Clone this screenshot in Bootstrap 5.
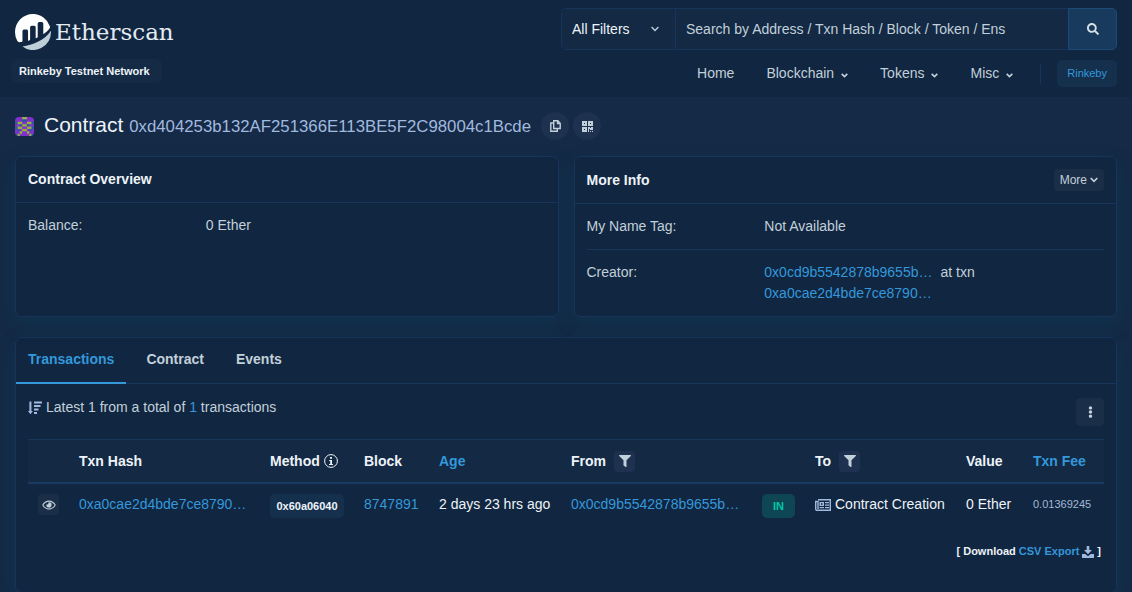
<!DOCTYPE html>
<html lang="en">
<head>
<meta charset="utf-8">
<meta name="viewport" content="width=device-width, initial-scale=1">
<title>Contract | Etherscan</title>
<link href="https://cdn.jsdelivr.net/npm/bootstrap@5.3.0/dist/css/bootstrap.min.css" rel="stylesheet">
<style>
:root{--panel:#112640;--page:#142a46;--line:#17345a;--txt:#c1d0da;--bright:#edf3f8;--accent:#3498db;--chip:#1b2e48;--teal:#14304d}
body{background:var(--page);color:var(--txt);font:14px/21px "Liberation Sans",Arial,sans-serif}
a{color:var(--accent);text-decoration:none}
svg{display:block;fill:currentColor}
svg.ln{fill:none;stroke:currentColor}
.edge{padding-left:15px;padding-right:15px}
.site-head{background:var(--panel);padding-top:8px;padding-bottom:10px}
.head-grid{display:grid;grid-template-columns:minmax(0,1fr) minmax(0,556px)}
.brand{color:#fff;gap:4px;margin-top:6px}
.brand span{font:23px/36px "DejaVu Serif",serif;color:#e4ebf2}
.net-tag{background:#152a44;border-radius:6px;color:var(--bright);font-size:11px;line-height:24px;font-weight:700;padding:0 12px 0 8px;margin:9px 0 0 -4px}
.finder{border:1px solid var(--line);border-radius:5px;background:#132944;height:42px}
.finder select{appearance:none;width:114px;border:0;border-right:1px solid var(--line);background:transparent;color:var(--bright);padding:0 10px;outline:0}
.finder select option{background:var(--panel)}
.pick{position:relative}
.pick svg{position:absolute;right:17px;top:17px;pointer-events:none}
.finder input{border:0;background:transparent;color:var(--txt);padding:0 10px;min-width:0;outline:0}
.finder input::placeholder{color:var(--txt);opacity:1}
.finder button{width:49px;margin:-1px;border:1px solid #1c4a78;background:#183a5c;color:#d5dfe8;border-radius:0 5px 5px 0}
.main-nav{margin-top:10px;gap:32px}
.main-nav a.item{color:var(--txt);gap:7px}
.main-nav .rule{width:1px;height:20px;background:var(--line);margin-left:-5px}
.main-nav .net{margin-left:-16px;background:var(--teal);border:0;border-radius:5px;color:var(--accent);font-size:11px;line-height:27px;padding:0 10px}
.title-row{padding-top:14px;padding-bottom:15px}
.title-row h1{font-size:21px;line-height:28px;color:var(--bright);font-weight:400;margin:0 10px}
.title-row h1 span{font-size:80%;color:#a2b9df}
.round-btn{width:28px;height:28px;border:0;border-radius:50%;background:#1e3250;color:var(--txt);padding:0}
.panel{background:var(--panel);border:1px solid var(--line);border-radius:7px;box-shadow:0 8px 19px rgba(4,76,104,.25)}
.duo{display:grid;grid-template-columns:1fr 1fr;gap:15px}
.panel-head{padding:12px;border-bottom:1px solid var(--line)}
.panel-head h2{font-size:14px;line-height:21px;font-weight:700;color:var(--bright);margin:0}
.panel-body{padding:12px}
.panel-body .row{--bs-gutter-x:16px}
.more-btn{border:0;border-radius:4px;background:var(--chip);color:var(--txt);font-size:12px;line-height:22px;padding:0 6px;gap:3px}
.panel-body hr{margin:12px 0;border-color:var(--line);opacity:1}
.tabs-card{margin-top:20px}
.tabs{border-bottom:1px solid var(--line);gap:8px}
.tabs a{color:var(--txt);font-weight:700;padding:11px 12px 12px;border-bottom:2px solid transparent;margin-bottom:-1px}
.tabs a.active{color:var(--accent);border-color:var(--accent)}
.kebab{width:28px;height:28px;border:0;border-radius:4px;background:var(--chip);color:var(--txt);padding:0;margin-top:2px}
.latest{line-height:23px}
.txns{width:100%;min-width:1076px;table-layout:fixed;margin-top:13px;border-collapse:separate;border-spacing:0}
.txns th{background:#132944;border-top:1px solid var(--line);border-bottom:2px solid #1a3a63;color:var(--bright);height:45px;padding:0 10px;white-space:nowrap}
.txns td{padding:10px;height:44px;white-space:nowrap;color:var(--bright)}
.mini{width:21px;height:21px;border:0;border-radius:4px;background:var(--chip);color:var(--txt);padding:0}
.mini.f{background:#1e3250}
.chip{display:block;line-height:24px;border-radius:5px;font-size:11px;font-weight:700;text-align:center}
.m-chip{background:var(--teal);color:var(--bright);width:74px}
.in-chip{background:#0f4654;color:#00c9a7;width:33px}
.txns td.fee{font-size:11px;color:#a2b9d4}
.export{font-size:11px;font-weight:700;color:var(--bright);padding:13px 3px 30px 0;gap:3px}
.soft{color:#a2b9df}
.ident{border-radius:4px}
</style>
</head>
<body>
<header class="site-head edge">
 <div class="head-grid">
  <div>
   <a href="#" class="brand d-flex align-items-center">
    <svg width="36" height="36" viewBox="0 0 293.775 293.671" aria-hidden="true"><path d="M61.055,139.379a12.405,12.405,0,0,1,12.468-12.4l20.676.068a12.415,12.415,0,0,1,12.415,12.415V217.65c2.328-.69,5.319-1.426,8.59-2.2a10.347,10.347,0,0,0,7.979-10.071V108.432A12.418,12.418,0,0,1,135.6,96.015h20.7a12.419,12.419,0,0,1,12.415,12.417v90s5.184-2.1,10.233-4.229a10.358,10.358,0,0,0,6.326-9.54V77.388A12.416,12.416,0,0,1,197.68,64.973h20.7A12.416,12.416,0,0,1,230.8,77.388v88.567c17.945-13.006,36.132-28.648,50.566-47.455a20.82,20.82,0,0,0,3.185-19.443A146.6,146.6,0,0,0,149.066,0C66.9-1.1,0,65.553,0,147.7a146.528,146.528,0,0,0,19.4,73.3,18.468,18.468,0,0,0,17.622,9.1c3.932-.346,8.828-.836,14.648-1.519a10.343,10.343,0,0,0,9.186-10.27V139.379"/><path fill="#bfcfda" d="M60.61,264.827a146.74,146.74,0,0,0,233.165-118.756c0-3.381-.157-6.724-.382-10.045C239.763,216.022,140.746,253.416,60.609,264.81"/></svg>
    <span>Etherscan</span></a>
   <div class="net-tag d-inline-block">Rinkeby Testnet Network</div>
  </div>
  <div>
   <form class="finder d-flex" onsubmit="return false">
    <div class="pick d-flex"><select aria-label="Filter"><option>All Filters</option><option>Addresses</option><option>Tokens</option></select><svg class="ln" width="8" height="6" viewBox="0 0 8 6" stroke-width="1.3"><path d="M.6 1 4 4.5 7.4 1"/></svg></div>
    <input class="flex-fill" type="text" aria-label="Search" placeholder="Search by Address / Txn Hash / Block / Token / Ens">
    <button type="submit" aria-label="Search" class="d-flex align-items-center justify-content-center"><svg width="12" height="12" viewBox="0 0 512 512"><path d="M505 442.7L405.3 343c-4.5-4.5-10.6-7-17-7H372c27.6-35.3 44-79.7 44-128C416 93.1 322.9 0 208 0S0 93.1 0 208s93.1 208 208 208c48.3 0 92.7-16.4 128-44v16.3c0 6.4 2.5 12.5 7 17l99.7 99.7c9.4 9.4 24.6 9.4 33.9 0l28.3-28.3c9.4-9.4 9.4-24.6.1-34zM208 336c-70.7 0-128-57.2-128-128 0-70.7 57.2-128 128-128 70.7 0 128 57.2 128 128 0 70.7-57.2 128-128 128z"/></svg></button>
   </form>
   <nav class="main-nav d-flex align-items-center justify-content-end">
    <a class="item" href="#">Home</a>
    <a class="item d-flex align-items-center" href="#">Blockchain <svg class="ln mt-1" width="7" height="5" viewBox="0 0 7 5" stroke-width="1.7"><path d="M.7.8 3.5 3.5 6.3.8"/></svg></a>
    <a class="item d-flex align-items-center" href="#">Tokens <svg class="ln mt-1" width="7" height="5" viewBox="0 0 7 5" stroke-width="1.7"><path d="M.7.8 3.5 3.5 6.3.8"/></svg></a>
    <a class="item d-flex align-items-center" href="#">Misc <svg class="ln mt-1" width="7" height="5" viewBox="0 0 7 5" stroke-width="1.7"><path d="M.7.8 3.5 3.5 6.3.8"/></svg></a>
    <span class="rule"></span>
    <button type="button" class="net">Rinkeby</button>
   </nav>
  </div>
 </div>
</header>
<main class="edge">
 <div class="title-row d-flex align-items-center">
  <svg class="ident" width="19" height="19" viewBox="0 0 8 8" aria-hidden="true"><path fill="#8130cc" d="M0 0h8v8H0z"/><path fill="#93b53f" d="M3 0h2v1H3zM1 2h2v1H1zM5 2h2v1H5zM3 3h2v1H3zM1 4h2v1H1zM5 4h2v1H5zM3 5h2v1H3zM2 6h1v1H2zM5 6h1v1H5zM1 7h1v1H1zM6 7h1v1H6z"/><path fill="#2b5a9c" d="M3 1h2v1H3zM0 2h1v1H0zM7 2h1v1H7zM2 3h1v1H2zM5 3h1v1H5zM0 4h1v1H0zM7 4h1v1H7zM1 5h1v1H1zM6 5h1v1H6zM0 7h1v1H0zM7 7h1v1H7z"/></svg>
  <h1>Contract <span>0xd404253b132AF251366E113BE5F2C98004c1Bcde</span></h1>
  <button type="button" class="round-btn me-1 d-flex align-items-center justify-content-center" aria-label="Copy address"><svg class="ln" width="11" height="12" viewBox="0 0 11 12" stroke-width="1.4"><path d="M3.7.8h4.1l2.4 2.4v5.3H3.7zM7.5.8v2.7h2.7M3.7 3H.8v8.2h6.5V8.5"/></svg></button>
  <button type="button" class="round-btn d-flex align-items-center justify-content-center" aria-label="QR code"><svg width="11" height="11" viewBox="0 0 11 11" fill-rule="evenodd"><path d="M0 0h5v5H0zM2 2v1h1V2zM6 0h5v5H6zM8 2v1h1V2zM0 6h5v5H0zM2 8v1h1V8zM6 6h2v1h1V6h2v3H8V8H7v3H6zM8 10h1v1H8zM10 10h1v1h-1z"/></svg></button>
 </div>
 <div class="duo">
  <section class="panel">
   <div class="panel-head"><h2>Contract Overview</h2></div>
   <div class="panel-body"><div class="row"><div class="col-4">Balance:</div><div class="col-8">0 Ether</div></div></div>
  </section>
  <section class="panel">
   <div class="panel-head d-flex align-items-center justify-content-between"><h2>More Info</h2><button type="button" class="more-btn d-flex align-items-center">More <svg class="ln" width="8" height="6" viewBox="0 0 8 6" stroke-width="1.7"><path d="M.7 1 4 4.3 7.3 1"/></svg></button></div>
   <div class="panel-body">
    <div class="row"><div class="col-4">My Name Tag:</div><div class="col-8">Not Available</div></div>
    <hr>
    <div class="row"><div class="col-4">Creator:</div><div class="col-8"><a href="#" class="me-2">0x0cd9b5542878b9655b…</a>at txn<br><a href="#">0xa0cae2d4bde7ce8790…</a></div></div>
   </div>
  </section>
 </div>
 <section class="panel tabs-card">
  <nav class="tabs d-flex"><a class="active" href="#">Transactions</a><a href="#">Contract</a><a href="#">Events</a></nav>
  <div class="panel-body pb-0">
   <div class="d-flex justify-content-between align-items-start">
    <div class="latest d-flex align-items-center gap-1"><svg class="soft" width="14" height="14" viewBox="0 0 14 14"><path d="M1.4.5h2V10h1.5l-2.5 3.2L0 10h1.4zM6 .5h8v2H6zM6 4h6.5v2H6zM6 7.5h4.5v2H6zM6 11h3v2H6z"/></svg><span>Latest 1 from a total of <a href="#">1</a> transactions</span></div>
    <button type="button" class="kebab d-flex align-items-center justify-content-center" aria-label="Options"><svg width="5" height="12" viewBox="0 0 192 512"><path d="M96 184c39.8 0 72 32.2 72 72s-32.2 72-72 72-72-32.2-72-72 32.2-72 72-72zM24 80c0 39.8 32.2 72 72 72s72-32.2 72-72S135.8 8 96 8 24 40.2 24 80zm0 352c0 39.8 32.2 72 72 72s72-32.2 72-72-32.2-72-72-72-72 32.2-72 72z"/></svg></button>
   </div>
   <div class="table-responsive">
   <table class="txns">
    <colgroup><col style="width:41px"><col style="width:191px"><col style="width:94px"><col style="width:75px"><col style="width:132px"><col style="width:191px"><col style="width:53px"><col style="width:151px"><col style="width:67px"><col style="width:81px"></colgroup>
    <thead><tr>
     <th></th><th>Txn Hash</th>
     <th><div class="d-flex align-items-center gap-1">Method <svg width="14" height="14" viewBox="0 0 14 14"><circle cx="7" cy="7" r="6.4" fill="none" stroke="currentColor"/><path d="M6 3h2v1.7H6zM5.2 6H8v4h1v1H5v-1h1.2V7h-1z"/></svg></div></th>
     <th>Block</th><th><a href="#">Age</a></th>
     <th><div class="d-flex align-items-center gap-2">From <button type="button" class="mini f d-flex align-items-center justify-content-center" aria-label="Filter by sender"><svg width="12" height="12" viewBox="0 0 512 512"><path d="M487.976 0H24.028C2.71 0-8.047 25.866 7.058 40.971L192 225.941V432c0 7.831 3.821 15.17 10.237 19.662l80 55.98C298.02 518.69 320 507.493 320 487.98V225.941l184.947-184.97C520.021 25.896 509.338 0 487.976 0z"/></svg></button></div></th>
     <th></th>
     <th><div class="d-flex align-items-center gap-2">To <button type="button" class="mini f d-flex align-items-center justify-content-center" aria-label="Filter by recipient"><svg width="12" height="12" viewBox="0 0 512 512"><path d="M487.976 0H24.028C2.71 0-8.047 25.866 7.058 40.971L192 225.941V432c0 7.831 3.821 15.17 10.237 19.662l80 55.98C298.02 518.69 320 507.493 320 487.98V225.941l184.947-184.97C520.021 25.896 509.338 0 487.976 0z"/></svg></button></div></th>
     <th>Value</th><th><a href="#">Txn Fee</a></th>
    </tr></thead>
    <tbody><tr class="align-top">
     <td><button type="button" class="mini d-flex align-items-center justify-content-center" aria-label="Preview transaction"><svg width="14" height="12" viewBox="0 0 576 512"><path d="M288 144a110.94 110.94 0 0 0-31.24 5 55.4 55.4 0 0 1 7.24 27 56 56 0 0 1-56 56 55.4 55.4 0 0 1-27-7.24A111.71 111.71 0 1 0 288 144zm284.52 97.4C518.29 135.59 410.93 64 288 64S57.68 135.64 3.48 241.41a32.35 32.35 0 0 0 0 29.19C57.71 376.41 165.07 448 288 448s230.32-71.64 284.52-177.41a32.35 32.35 0 0 0 0-29.19zM288 400c-98.65 0-189.09-55-237.93-144C98.91 167 189.34 112 288 112s189.09 55 237.93 144C477.1 345 386.66 400 288 400z"/></svg></button></td>
     <td><a href="#">0xa0cae2d4bde7ce8790…</a></td>
     <td><span class="chip m-chip">0x60a06040</span></td>
     <td><a href="#">8747891</a></td>
     <td>2 days 23 hrs ago</td>
     <td><a href="#">0x0cd9b5542878b9655b…</a></td>
     <td><span class="chip in-chip">IN</span></td>
     <td><div class="d-flex align-items-center gap-1"><svg class="soft" width="16" height="12" viewBox="0 0 16 12"><path fill="none" stroke="currentColor" stroke-width="1.4" d="M3 .7h12.3v10.6H2A1.3 1.3 0 0 1 .7 10V2.5H3V10"/><path fill-rule="evenodd" d="M4.5 3H9v4H4.5zM6 4.2v1.6h1.5V4.2zM10 3h4v1.3h-4zM10 5.5h4v1.3h-4zM4.5 8H9v1.3H4.5zM10 8h4v1.3h-4z"/></svg><span>Contract Creation</span></div></td>
     <td>0 Ether</td>
     <td class="fee">0.01369245</td>
    </tr></tbody>
   </table>
   </div>
   <div class="export d-flex justify-content-end align-items-center"><span>[ Download <a href="#">CSV Export</a></span><svg class="soft" width="12" height="12" viewBox="0 0 12 12"><path d="M4.7 0h2.6v4H10L6 8.2 2 4h2.7zM0 8h3.3L6 10.3 8.7 8H12v4H0z"/></svg><span>]</span></div>
  </div>
 </section>
</main>
<script src="https://cdn.jsdelivr.net/npm/bootstrap@5.3.0/dist/js/bootstrap.bundle.min.js"></script>
</body>
</html>
